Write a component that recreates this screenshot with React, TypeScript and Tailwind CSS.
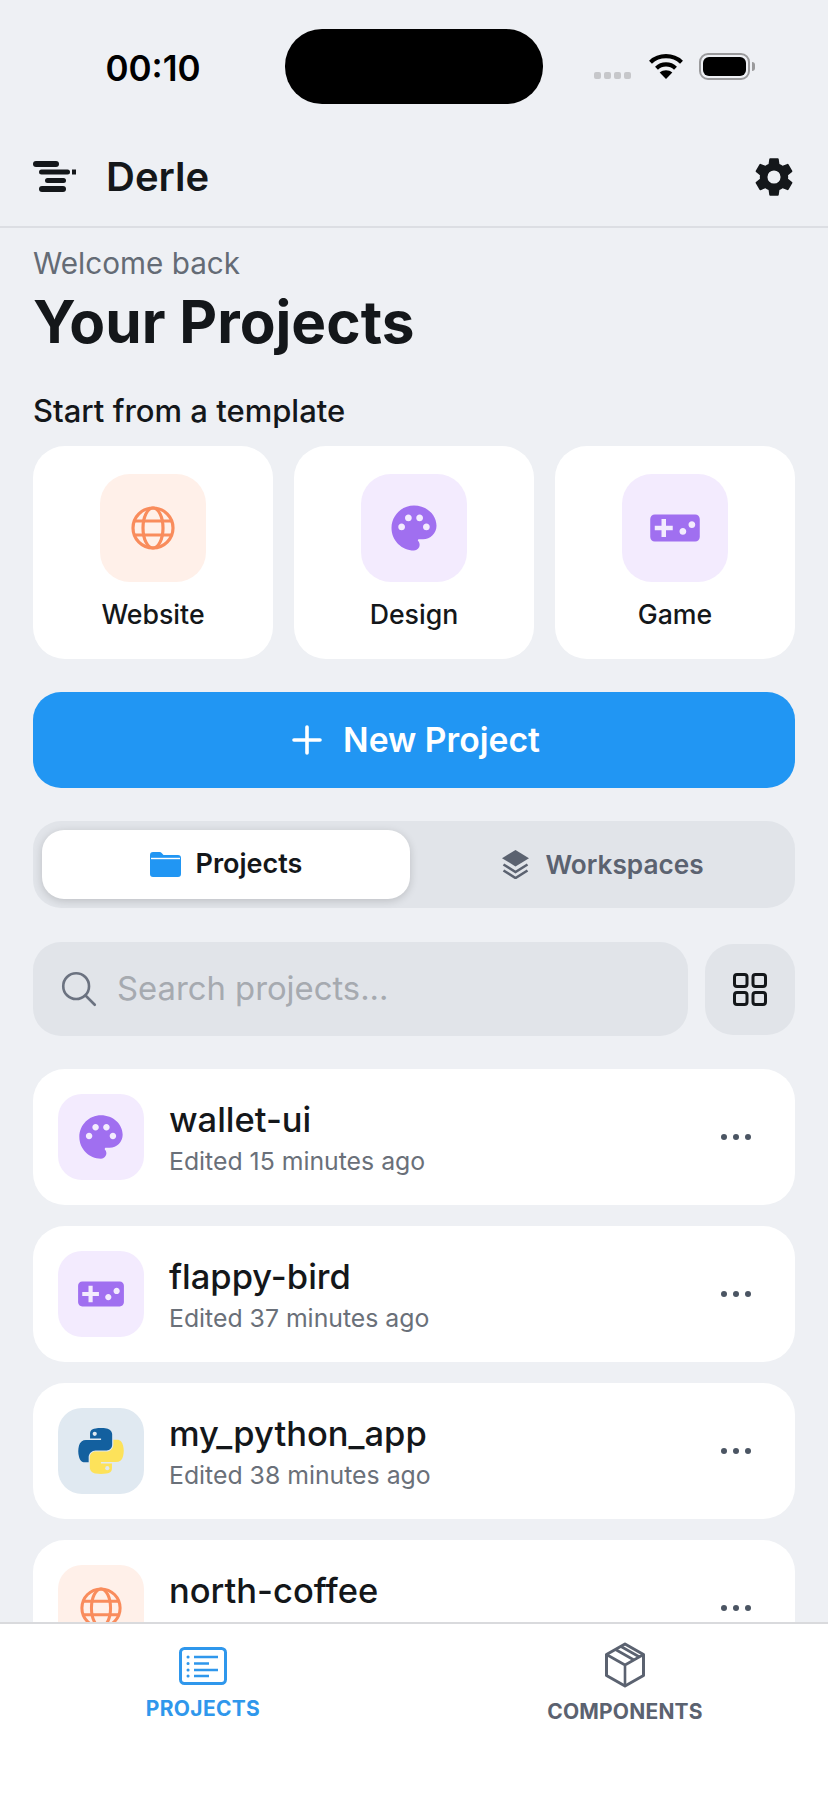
import React from "react";
import { IoSearchOutline, IoSettingsSharp } from "react-icons/io5";
import { MdVideogameAsset, MdPalette } from "react-icons/md";

function Globe({ size }: { size: number }) {
  return (
    <svg width={size} height={size} viewBox="0 0 44 44" fill="none" stroke="#f98c5c" strokeWidth={3.2}>
      <circle cx="22" cy="22" r="20" />
      <ellipse cx="22" cy="22" rx="10" ry="20" />
      <path d="M4 15h36M4 29h36" />
    </svg>
  );
}

const pythonPath =
  "M54.9 0C50.3 0 45.9.4 42.1 1.1 30.8 3.1 28.8 7.3 28.8 15v10.1h26.4v3.4H18.9c-7.7 0-14.4 4.6-16.5 13.4-2.4 10.1-2.5 16.4 0 26.9 1.9 7.8 6.3 13.4 14 13.4h9.1V70.1c0-8.7 7.6-16.4 16.6-16.4h26.4c7.3 0 13.2-6.1 13.2-13.5V15c0-7.2-6.1-12.6-13.2-13.9C63.9.3 59.2 0 54.9 0z";

function Python() {
  return (
    <svg width="46" height="46" viewBox="0 0 110 110">
      <path d={pythonPath} fill="#13609f" />
      <circle cx="40" cy="14" r="5" fill="#dfe8f0" />
      <g transform="rotate(180 55 55)">
        <path d={pythonPath} fill="#fde25a" />
        <circle cx="40" cy="14" r="5" fill="#dfe8f0" />
      </g>
    </svg>
  );
}

function Logo() {
  return (
    <svg width="44" height="32" viewBox="0 0 44 32" fill="#14171a" className="shrink-0">
      <rect x="0" y="0" width="26" height="6" rx="3" />
      <rect x="6" y="8.5" width="31" height="5" rx="2.5" />
      <rect x="39" y="8.5" width="4" height="5" />
      <rect x="12" y="17" width="21" height="5" rx="2.5" />
      <rect x="6" y="25" width="27" height="6" rx="3" />
    </svg>
  );
}

function Wifi() {
  return (
    <svg width="34" height="26" viewBox="0 0 34 26" fill="none" stroke="#000" strokeWidth={4.2}>
      <path d="M1.5 9.2C10 1.2 24 1.2 32.5 9.2" />
      <path d="M7.5 15.2C12.8 10.2 21.2 10.2 26.5 15.2" />
      <path d="M17 26l-6.3-6.6c3.6-3 9-3 12.6 0z" fill="#000" stroke="none" />
    </svg>
  );
}

function Battery() {
  return (
    <div className="flex items-center">
      <div className="flex h-[27px] w-[51px] items-center justify-center rounded-[9px] border-2 border-[#9a9a9c] p-[2px]">
        <div className="h-full w-full rounded-[6px] bg-black" />
      </div>
      <div className="ml-[2px] h-[9px] w-[3px] rounded-r-full bg-[#9a9a9c]" />
    </div>
  );
}

function FolderIcon() {
  return (
    <svg width="31" height="25" viewBox="0 0 31 25">
      <path d="M0 3a3 3 0 0 1 3-3h6.5a3 3 0 0 1 2.4 1.2L13.5 3H28a3 3 0 0 1 3 3v16a3 3 0 0 1-3 3H3a3 3 0 0 1-3-3z" fill="#2196f3" />
      <path d="M1 6.5h29" stroke="#ffffff" strokeWidth={1.4} />
    </svg>
  );
}

function LayersIcon() {
  return (
    <svg width="27" height="29" viewBox="0 0 27 29" fill="none">
      <path d="M13.5 0L27 8.2 13.5 16.4 0 8.2z" fill="#5b6270" />
      <path d="M1.5 14.5L13.5 22 25.5 14.5" stroke="#5b6270" strokeWidth={2.6} />
      <path d="M1.5 20.5L13.5 28 25.5 20.5" stroke="#5b6270" strokeWidth={2.6} />
    </svg>
  );
}

function GridIcon() {
  return (
    <svg width="34" height="33" viewBox="0 0 34 33" fill="none" stroke="#14171a" strokeWidth={3}>
      <rect x="1.5" y="1.5" width="12.5" height="12" rx="2.5" />
      <rect x="20" y="1.5" width="12.5" height="12" rx="2.5" />
      <rect x="1.5" y="19.5" width="12.5" height="12" rx="2.5" />
      <rect x="20" y="19.5" width="12.5" height="12" rx="2.5" />
    </svg>
  );
}

function TemplateCard({ label, box, children }: { label: string; box: string; children: React.ReactNode }) {
  return (
    <div className="flex h-[213px] flex-col items-center rounded-[32px] bg-white pt-[28px]">
      <div className={`flex h-[108px] w-[106px] items-center justify-center rounded-[30px] ${box}`}>{children}</div>
      <div className="mt-[16px] text-[26.7px] leading-[32px] font-medium text-[#14171a]">{label}</div>
    </div>
  );
}

function ProjectCard({ name, sub, box, children }: { name: string; sub: string; box: string; children: React.ReactNode }) {
  return (
    <div className="flex h-[136px] shrink-0 items-center rounded-[32px] bg-white pr-[44px] pl-[25px]">
      <div className={`flex h-[86px] w-[86px] shrink-0 items-center justify-center rounded-[24px] ${box}`}>{children}</div>
      <div className="ml-[25px] flex-1 pt-[2px]">
        <div className="text-[34.5px] leading-[40px] font-medium text-[#14171a]">{name}</div>
        <div className="mt-[6px] text-[24.8px] leading-[30px] text-[#6a7079]">{sub}</div>
      </div>
      <div className="flex w-[30px] justify-between">
        <span className="h-[6px] w-[6px] rounded-full bg-[#4b5563]" />
        <span className="h-[6px] w-[6px] rounded-full bg-[#4b5563]" />
        <span className="h-[6px] w-[6px] rounded-full bg-[#4b5563]" />
      </div>
    </div>
  );
}

export default function App() {
  return (
    <div
      className="flex h-[1801px] w-[828px] flex-col overflow-hidden bg-[#eef0f4]"
      style={{ fontFamily: "Inter, 'Noto Sans', sans-serif" }}
    >
      <div className="flex h-[104px] shrink-0 pt-[29px]">
        <div className="flex h-[75px] w-[285px] items-center justify-center pt-[4px] pl-[21px] text-[35px] font-semibold text-black">
          00:10
        </div>
        <div className="h-[75px] w-[258px] rounded-[37px] bg-black" />
        <div className="flex flex-1 items-start pt-[24px] pl-[51px]">
          <div className="mt-[19px] flex gap-[3px]">
            <span className="h-[7px] w-[7px] rounded-[2px] bg-[#c6c7ca]" />
            <span className="h-[7px] w-[7px] rounded-[2px] bg-[#c6c7ca]" />
            <span className="h-[7px] w-[7px] rounded-[2px] bg-[#c6c7ca]" />
            <span className="h-[7px] w-[7px] rounded-[2px] bg-[#c6c7ca]" />
          </div>
          <div className="ml-[18px] h-[26px]">
            <Wifi />
          </div>
          <div className="ml-[16px]">
            <Battery />
          </div>
        </div>
      </div>

      <div className="flex h-[124px] shrink-0 items-center border-b-2 border-[#dcdee3] pt-[24px] pr-[33px] pl-[33px]">
        <Logo />
        <div className="ml-[29px] flex-1 text-[40px] leading-[46px] font-semibold text-[#14171a]">Derle</div>
        <IoSettingsSharp size={42} color="#14171a" />
      </div>

      <div className="flex flex-1 flex-col overflow-hidden px-[33px]">
        <div className="mt-[17px] text-[29.7px] leading-[36px] text-[#646b75]">Welcome back</div>
        <div className="mt-[6px] text-[58.5px] leading-[70px] font-bold text-[#14171a]">Your Projects</div>
        <div className="mt-[36px] text-[31px] leading-[36px] font-medium text-[#14171a]">Start from a template</div>

        <div className="mt-[17px] grid grid-cols-3 gap-[21px]">
          <TemplateCard label="Website" box="bg-[#fff0e9]">
            <Globe size={44} />
          </TemplateCard>
          <TemplateCard label="Design" box="bg-[#f3ebfe]">
            <MdPalette size={54} color="#a06ff0" />
          </TemplateCard>
          <TemplateCard label="Game" box="bg-[#f3ebfe]">
            <MdVideogameAsset size={54} color="#a06ff0" />
          </TemplateCard>
        </div>

        <div className="mt-[33px] flex h-[96px] shrink-0 items-center justify-center rounded-[28px] bg-[#2196f3] pl-[4px] text-white">
          <svg width="30" height="30" viewBox="0 0 30 30" stroke="#fff" strokeWidth={3.6} strokeLinecap="round">
            <path d="M15 2v26M2 15h26" />
          </svg>
          <span className="ml-[21px] text-[33.7px] font-semibold">New Project</span>
        </div>

        <div className="mt-[33px] flex h-[87px] shrink-0 items-center rounded-[28px] bg-[#e1e4e9] p-[9px]">
          <div className="flex h-[69px] w-[368px] items-center justify-center rounded-[22px] bg-white shadow-[0_2px_8px_rgba(0,0,0,0.16)]">
            <FolderIcon />
            <span className="ml-[15px] text-[27px] font-semibold text-[#14171a]">Projects</span>
          </div>
          <div className="flex flex-1 items-center justify-center pl-[10px]">
            <LayersIcon />
            <span className="ml-[16px] text-[26.2px] font-semibold text-[#5b6270]">Workspaces</span>
          </div>
        </div>

        <div className="mt-[34px] flex shrink-0 items-center gap-[17px]">
          <div className="flex h-[94px] flex-1 items-center rounded-[28px] bg-[#e1e4e9] pl-[25px]">
            <IoSearchOutline size={42} color="#6b7280" />
            <span className="ml-[17px] text-[32.8px] text-[#a6aab0]">Search projects...</span>
          </div>
          <div className="flex h-[91px] w-[90px] items-center justify-center rounded-[28px] bg-[#e1e4e9]">
            <GridIcon />
          </div>
        </div>

        <div className="mt-[33px] flex flex-col gap-[21px]">
          <ProjectCard name="wallet-ui" sub="Edited 15 minutes ago" box="bg-[#f3ebfe]">
            <MdPalette size={52} color="#a06ff0" />
          </ProjectCard>
          <ProjectCard name="flappy-bird" sub="Edited 37 minutes ago" box="bg-[#f3ebfe]">
            <MdVideogameAsset size={50} color="#a06ff0" />
          </ProjectCard>
          <ProjectCard name="my_python_app" sub="Edited 38 minutes ago" box="bg-[#e0e9f1]">
            <Python />
          </ProjectCard>
          <ProjectCard name="north-coffee" sub="Edited 1 hour ago" box="bg-[#fff0e9]">
            <Globe size={42} />
          </ProjectCard>
        </div>
      </div>

      <div className="flex h-[179px] shrink-0 border-t-2 border-[#d9dadd] bg-white">
        <div className="flex w-[406px] flex-col items-center pt-[23px]">
          <svg width="48" height="38" viewBox="0 0 48 38" fill="none" stroke="#2f97ec" strokeWidth={3}>
            <rect x="1.5" y="1.5" width="45" height="35" rx="4" />
            <path strokeWidth={2.4} d="M15 10h24M15 16.5h15M15 23h24M15 29h15" />
            <path strokeWidth={3} strokeLinecap="round" d="M9 10h.1M9 16.5h.1M9 23h.1M9 29h.1" />
          </svg>
          <div className="mt-[11px] text-[21px] leading-[26px] font-bold tracking-[0.3px] text-[#2f97ec]">PROJECTS</div>
        </div>
        <div className="flex flex-1 flex-col items-center pt-[18px] pl-[16px]">
          <svg width="42" height="46" viewBox="0 0 42 46" fill="none" stroke="#5b6270" strokeWidth={3} strokeLinejoin="round">
            <path d="M21 2L39.5 12.5V33.5L21 44 2.5 33.5V12.5z" />
            <path d="M2.5 12.5L21 23 39.5 12.5M21 23V44M11.5 7.5L30 18M17 4.5L35.5 15" strokeWidth={2.6} />
          </svg>
          <div className="mt-[11px] text-[21px] leading-[26px] font-bold tracking-[0.2px] text-[#5b6270]">COMPONENTS</div>
        </div>
      </div>
    </div>
  );
}
